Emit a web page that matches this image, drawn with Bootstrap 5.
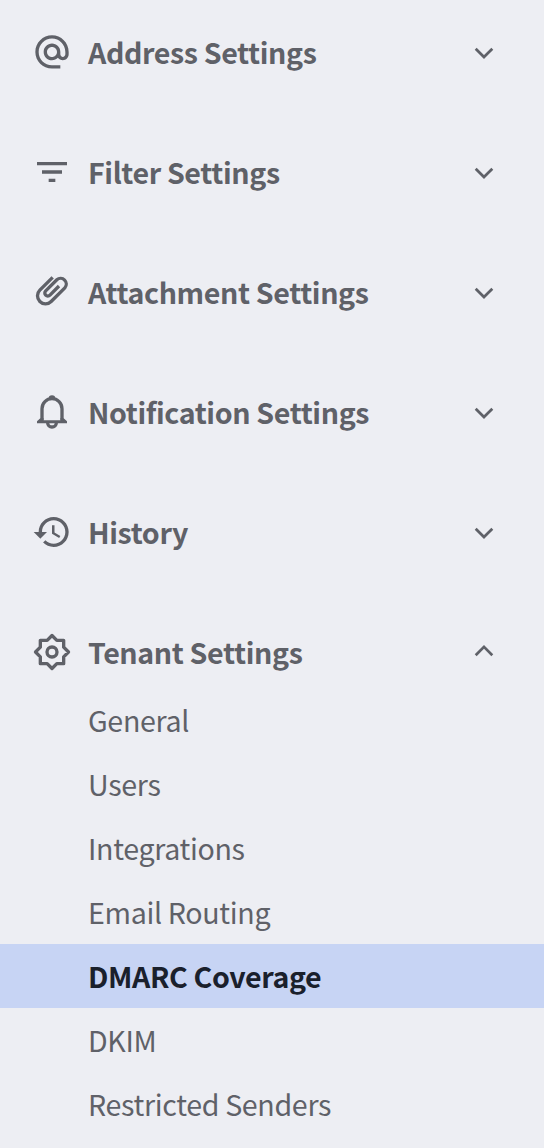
<!DOCTYPE html>
<html lang="en">
<head>
<meta charset="utf-8">
<meta name="viewport" content="width=device-width, initial-scale=1">
<title>Settings</title>
<link href="https://cdn.jsdelivr.net/npm/bootstrap@5.3.0/dist/css/bootstrap.min.css" rel="stylesheet">
<style>
body{background:#edeef3;color:#5f6168;font-family:"Noto Sans CJK SC","Noto Sans CJK JP",sans-serif;font-size:28.6px;letter-spacing:-.33px;line-height:64px}
.settings-nav{padding-top:20px;gap:56px}
.group-head{height:64px;padding:0 40px 0 32px;color:inherit;letter-spacing:-.37px}
.group-icon{width:40px;height:40px;margin-right:16px}
.chev{width:40px;height:40px;margin-right:0}
.line-art{fill:none;stroke:currentColor}
.sub-list{padding-top:4px}
.sub-item{height:64px;padding-left:88px;color:inherit}
.sub-item.active{background:#c7d4f4;color:#1a202c;letter-spacing:-.39px}
</style>
<script src="https://cdn.jsdelivr.net/npm/bootstrap@5.3.0/dist/js/bootstrap.bundle.min.js"></script>
</head>
<body>
<svg class="d-none">
<symbol id="chev-down" viewBox="0 0 40 40"><path d="M11.7 16.7 20 25 28.3 16.7" fill="none" stroke="currentColor" stroke-width="2.7"/></symbol>
<symbol id="chev-up" viewBox="0 0 40 40"><path d="M11.7 23.2 20 14.9 28.3 23.2" fill="none" stroke="currentColor" stroke-width="2.7"/></symbol>
</svg>
<nav class="settings-nav d-flex flex-column">
<a href="#" class="group-head d-flex align-items-center fw-bold text-decoration-none">
<svg class="group-icon" viewBox="0 0 24 24" fill="currentColor"><path d="M12 1.95c-5.52 0-10 4.48-10 10s4.48 10 10 10h5v-2h-5c-4.34 0-8-3.66-8-8s3.66-8 8-8 8 3.66 8 8v1.43c0 .79-.71 1.57-1.5 1.57s-1.5-.78-1.5-1.57v-1.43c0-2.76-2.24-5-5-5s-5 2.24-5 5 2.24 5 5 5c1.38 0 2.64-.56 3.54-1.47.65.89 1.77 1.47 2.96 1.47 1.97 0 3.5-1.6 3.5-3.57v-1.43c0-5.52-4.48-10-10-10zm0 13c-1.66 0-3-1.34-3-3s1.34-3 3-3 3 1.34 3 3-1.34 3-3 3z"/></svg>
<span>Address Settings</span><svg class="chev ms-auto"><use href="#chev-down"/></svg></a>
<a href="#" class="group-head d-flex align-items-center fw-bold text-decoration-none">
<svg class="group-icon" viewBox="0 0 24 24" fill="currentColor"><path d="M10 18h4v-2h-4v2zM3 6v2h18V6H3zm3 7h12v-2H6v2z"/></svg>
<span>Filter Settings</span><svg class="chev ms-auto"><use href="#chev-down"/></svg></a>
<a href="#" class="group-head d-flex align-items-center fw-bold text-decoration-none">
<svg class="group-icon line-art" viewBox="24 24 120 120" stroke-width="10"><path d="M86 40 47.5 78.5A24 24 0 0 0 81.5 112.5L122.5 71.5A17 17 0 0 0 98.5 47.5L65.1 80.6A9 9 0 0 0 77.9 93.4L105 66"/></svg>
<span>Attachment Settings</span><svg class="chev ms-auto"><use href="#chev-down"/></svg></a>
<a href="#" class="group-head d-flex align-items-center fw-bold text-decoration-none">
<svg class="group-icon line-art" viewBox="24 24 120 120" stroke-width="10"><path d="M54 107V74a30 30 0 0 1 60 0V107M71 116a13 13 0 0 0 26 0"/><path d="M74 43a10 9.5 0 0 1 20 0zM39 118v-6l10-9h10v6h50v-6h10l10 9v6z" fill="currentColor" stroke="none"/></svg>
<span>Notification Settings</span><svg class="chev ms-auto"><use href="#chev-down"/></svg></a>
<a href="#" class="group-head d-flex align-items-center fw-bold text-decoration-none">
<svg class="group-icon" viewBox="0 0 24 24" fill="currentColor"><path d="M13 3c-4.97 0-9 4.03-9 9H1l3.89 3.89.07.14L9 12H6c0-3.87 3.13-7 7-7s7 3.13 7 7-3.13 7-7 7c-1.93 0-3.68-.79-4.94-2.06l-1.42 1.42C8.27 19.99 10.51 21 13 21c4.97 0 9-4.03 9-9s-4.03-9-9-9zm-1 5v5l4.28 2.54.72-1.21-3.5-2.08V8H12z"/></svg>
<span>History</span><svg class="chev ms-auto"><use href="#chev-down"/></svg></a>
<div>
<a href="#" class="group-head d-flex align-items-center fw-bold text-decoration-none">
<svg class="group-icon line-art" viewBox="0 0 24 24" stroke-width="2" stroke-linejoin="round"><path d="M12 2.1 14.9 5H19v4.1L21.9 12 19 14.9V19h-4.1L12 21.9 9.1 19H5v-4.1L2.1 12 5 9.1V5h4.1z"/><circle cx="12" cy="12" r="3"/></svg>
<span>Tenant Settings</span><svg class="chev ms-auto"><use href="#chev-up"/></svg></a>
<div class="sub-list d-flex flex-column">
<a href="#" class="sub-item text-decoration-none">General</a>
<a href="#" class="sub-item text-decoration-none">Users</a>
<a href="#" class="sub-item text-decoration-none">Integrations</a>
<a href="#" class="sub-item text-decoration-none">Email Routing</a>
<a href="#" class="sub-item text-decoration-none active fw-bold">DMARC Coverage</a>
<a href="#" class="sub-item text-decoration-none">DKIM</a>
<a href="#" class="sub-item text-decoration-none">Restricted Senders</a>
</div>
</div>
</nav>
</body>
</html>
